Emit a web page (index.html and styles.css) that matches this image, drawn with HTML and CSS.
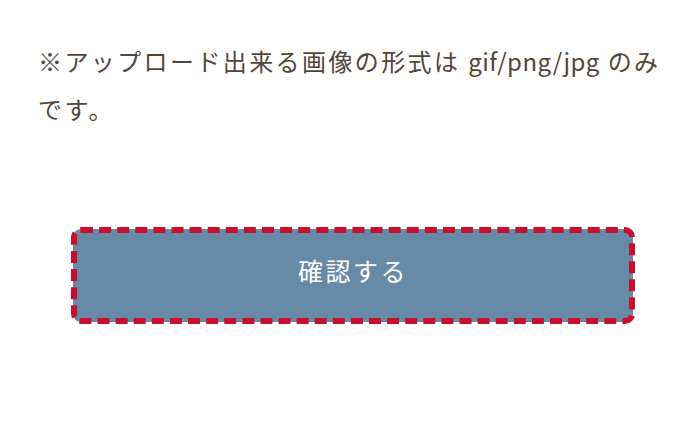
FILE: index.html
```html
<!DOCTYPE html>
<html lang="ja">
<head>
<meta charset="utf-8">
<link rel="stylesheet" href="styles.css">
</head>
<body>
<div class="page">
  <p class="note">※アップロード出来る画像の形式は <span class="latin">gif/png/jpg</span> のみです。</p>
  <div class="actions">
    <button class="confirm" type="button">確認する</button>
  </div>
</div>
</body>
</html>
```
FILE: styles.css
```css
html, body {
  margin: 0;
  padding: 0;
  background: #ffffff;
}
.page {
  width: 700px;
  height: 436px;
  box-sizing: border-box;
  padding: 37px 30px 0 38px;
  font-family: "Noto Sans CJK JP", "Noto Sans", sans-serif;
}
.note {
  margin: 0;
  font-size: 24px;
  line-height: 48px;
  letter-spacing: 0.1em;
  color: #54453a;
}
.latin {
  letter-spacing: 0.02em;
}
.actions {
  display: flex;
  margin-top: 96px;
  padding-left: 35px;
}
.confirm {
  width: 560px;
  height: 93px;
  display: flex;
  align-items: center;
  justify-content: center;
  padding: 0 0 12px 0;
  border: none;
  border-radius: 8px;
  background: #678aa6;
  color: #ffffff;
  font-family: "Noto Sans CJK JP", "Noto Sans", sans-serif;
  font-size: 25px;
  letter-spacing: 0.1em;
  outline: 6px dashed #c8102e;
  outline-offset: -4px;
}
```
